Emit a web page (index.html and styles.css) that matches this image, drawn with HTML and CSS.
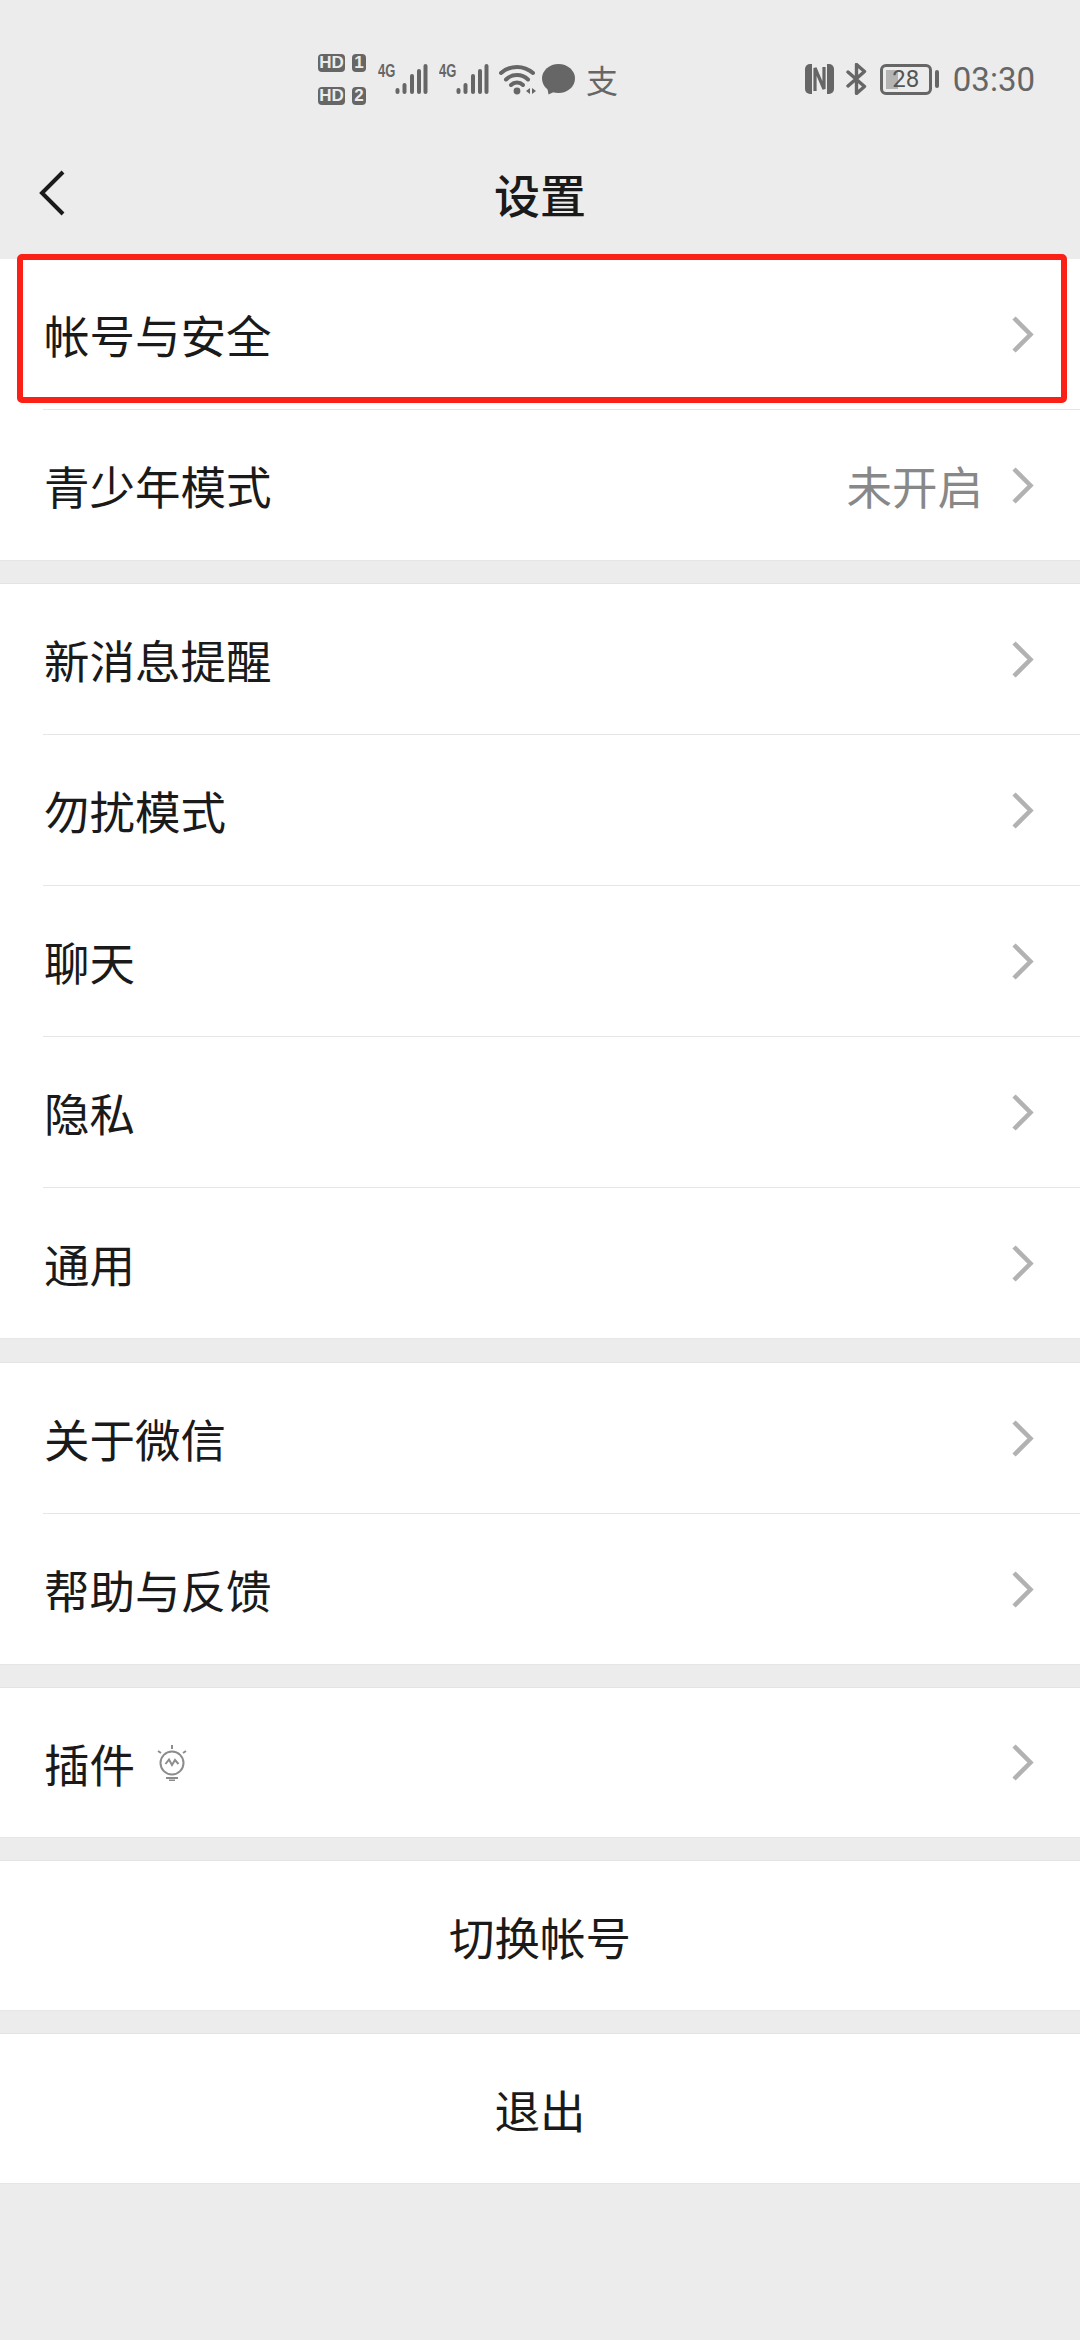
FILE: index.html
```html
<!DOCTYPE html>
<html lang="zh-CN">
<head>
  <meta charset="UTF-8">
  <meta name="viewport" content="width=device-width, initial-scale=1.0">
  <title>设置</title>
  <link rel="stylesheet" href="styles.css">
</head>
<body>
  <svg class="defs" width="0" height="0">
    <symbol id="chevron" viewBox="0 0 23 39">
      <path d="M3 3 L19.5 19.5 L3 36" fill="none" stroke="#b2b2b2" stroke-width="4.5"/>
    </symbol>
    <symbol id="signal" viewBox="0 0 33 32">
      <g fill="none" stroke="#666" stroke-width="4" stroke-linecap="round">
        <path d="M2.5 29 V27"/>
        <path d="M9.5 29 V22"/>
        <path d="M17 29 V13"/>
        <path d="M24 29 V8"/>
        <path d="M30.5 29 V3"/>
      </g>
    </symbol>
  </svg>

  <header>
    <div class="status-bar">
      <div class="sims">
        <span class="hd">HD</span><span class="sim-no">1</span>
        <span class="hd">HD</span><span class="sim-no">2</span>
      </div>
      <div class="net net-one">
        <span class="net-label">4G</span>
        <svg width="33" height="32"><use href="#signal"/></svg>
      </div>
      <div class="net net-two">
        <span class="net-label">4G</span>
        <svg width="33" height="32"><use href="#signal"/></svg>
      </div>
      <svg class="ic-wifi" width="38" height="32" viewBox="0 0 38 32">
        <g fill="none" stroke="#666" stroke-width="4" stroke-linecap="round">
          <path d="M2 10 A24 24 0 0 1 34 10"/>
          <path d="M7 16.5 A16 16 0 0 1 29 16.5"/>
          <path d="M12 22 A8.5 8.5 0 0 1 24 22"/>
        </g>
        <circle cx="18" cy="28" r="3.4" fill="#666"/>
        <path d="M31 25 V31 L27 28 Z M33 25 V31 L37 28 Z" fill="#666"/>
      </svg>
      <svg class="ic-bubble" width="33" height="31" viewBox="0 0 33 31">
        <ellipse cx="16.5" cy="14.5" rx="16.5" ry="14.5" fill="#666"/>
        <path d="M5 22 L6.5 30.5 L16 26 Z" fill="#666"/>
      </svg>
      <span class="ic-pay">支</span>

      <svg class="ic-nfc" width="29" height="30" viewBox="0 0 29 30">
        <path d="M7 0 H5 A5 5 0 0 0 0 5 V25 A5 5 0 0 0 5 30 H7 Z" fill="#666"/>
        <path d="M22 0 H24 A5 5 0 0 1 29 5 V25 A5 5 0 0 1 24 30 H22 Z" fill="#666"/>
        <path d="M10 27 V4 L19 25 V3" fill="none" stroke="#666" stroke-width="3.2"/>
      </svg>
      <svg class="ic-bt" width="21" height="32" viewBox="0 0 21 32">
        <path d="M2 9 L18.5 23.5 L10.5 30.5 V1.5 L18.5 8.5 L2 23" fill="none" stroke="#666" stroke-width="3.4" stroke-linecap="round" stroke-linejoin="round"/>
      </svg>
      <div class="battery">
        <div class="battery-body">
          <div class="battery-fill"></div>
          <span class="battery-num">28</span>
        </div>
        <div class="battery-nub"></div>
      </div>
      <span class="clock">03:30</span>
    </div>

    <nav class="nav-bar">
      <svg class="back" width="28" height="48" viewBox="0 0 28 48">
        <path d="M24 3 L3 24 L24 45" fill="none" stroke="#1a1a1a" stroke-width="4"/>
      </svg>
      <h1>设置</h1>
    </nav>
  </header>

  <main>
    <section class="group first">
      <div class="marker"></div>
      <a class="row"><span class="label">帐号与安全</span><svg class="chevron"><use href="#chevron"/></svg></a>
      <a class="row"><span class="label">青少年模式</span><span class="value">未开启</span><svg class="chevron"><use href="#chevron"/></svg></a>
    </section>

    <section class="group">
      <a class="row"><span class="label">新消息提醒</span><svg class="chevron"><use href="#chevron"/></svg></a>
      <a class="row"><span class="label">勿扰模式</span><svg class="chevron"><use href="#chevron"/></svg></a>
      <a class="row"><span class="label">聊天</span><svg class="chevron"><use href="#chevron"/></svg></a>
      <a class="row"><span class="label">隐私</span><svg class="chevron"><use href="#chevron"/></svg></a>
      <a class="row"><span class="label">通用</span><svg class="chevron"><use href="#chevron"/></svg></a>
    </section>

    <section class="group wide-gap">
      <a class="row"><span class="label">关于微信</span><svg class="chevron"><use href="#chevron"/></svg></a>
      <a class="row"><span class="label">帮助与反馈</span><svg class="chevron"><use href="#chevron"/></svg></a>
    </section>

    <section class="group">
      <a class="row">
        <span class="label">插件</span>
        <svg class="bulb" width="30" height="36" viewBox="0 0 30 36">
          <g fill="none" stroke="#8c8c8c" stroke-width="2">
            <circle cx="15" cy="18" r="11.5"/>
            <path d="M8.5 19 L12 14.5 L15 20 L18 15 L21.5 19"/>
            <path d="M9 33 H21 M12 35.5 H18"/>
            <path d="M15 0 V4 M1 6 L4 8 M29 6 L26 8"/>
          </g>
        </svg>
        <svg class="chevron"><use href="#chevron"/></svg>
      </a>
    </section>

    <section class="group">
      <a class="row center"><span class="label">切换帐号</span></a>
    </section>

    <section class="group">
      <a class="row center"><span class="label">退出</span></a>
    </section>
  </main>
</body>
</html>
```

FILE: styles.css
```css
html, body {
  margin: 0;
  padding: 0;
}
body {
  height: 2340px;
  overflow: hidden;
  background-color: #ececec;
  color: #1a1a1a;
  font-family: "Noto Sans CJK SC", "Noto Sans", sans-serif;
}
.defs {
  position: absolute;
}

/* status bar */
.status-bar {
  display: flex;
  align-items: center;
  box-sizing: border-box;
  height: 133px;
  padding: 53px 45px 28px 318px;
}
.sims {
  display: grid;
  grid-template-columns: 27px 14px;
  grid-template-rows: 18px 18px;
  column-gap: 7px;
  row-gap: 15px;
}
.hd, .sim-no {
  display: flex;
  align-items: center;
  justify-content: center;
  background-color: #666;
  color: #ececec;
  border-radius: 4px;
  font-family: "Liberation Sans", sans-serif;
  font-size: 17px;
  font-weight: bold;
}
.net {
  display: flex;
  width: 50px;
}
.net-one {
  margin-left: 12px;
}
.net-two {
  margin-left: 11px;
}
.net-label {
  width: 17px;
  font-family: "Liberation Sans", sans-serif;
  font-size: 18px;
  line-height: 16px;
  font-weight: bold;
  color: #666;
  transform: scaleX(0.72);
  transform-origin: left top;
}
.ic-wifi {
  margin-left: 10px;
}
.ic-bubble {
  margin-left: 5px;
}
.ic-pay {
  margin-left: 11px;
  width: 32px;
  font-size: 32px;
  line-height: 32px;
  color: #666;
}
.ic-nfc {
  margin-left: auto;
}
.ic-bt {
  margin-left: 12px;
}
.battery {
  display: flex;
  align-items: center;
  margin-left: 13px;
}
.battery-body {
  position: relative;
  display: flex;
  align-items: center;
  justify-content: center;
  box-sizing: border-box;
  width: 52px;
  height: 31px;
  border: 3px solid #666;
  border-radius: 6px;
}
.battery-fill {
  position: absolute;
  left: 3px;
  top: 3px;
  bottom: 3px;
  width: 12px;
  background-color: #b4b4b4;
}
.battery-num {
  position: relative;
  font-family: "Roboto", sans-serif;
  font-size: 24px;
  color: #555;
}
.battery-nub {
  width: 4px;
  height: 18px;
  margin-left: 3px;
  background-color: #666;
  border-radius: 2px;
}
.clock {
  margin-left: 14px;
  font-family: "Roboto", sans-serif;
  font-size: 33px;
  color: #666;
}

/* nav */
.nav-bar {
  position: relative;
  display: flex;
  align-items: center;
  justify-content: center;
  height: 126px;
}
.nav-bar h1 {
  margin: 0 0 6px;
  font-size: 46px;
  font-weight: 500;
}
.back {
  position: absolute;
  left: 39px;
  top: 36px;
}

/* list */
.group {
  position: relative;
  background-color: #fff;
  margin-top: 22px;
  border-top: 1px solid #e3e3e3;
}
.group.first {
  margin-top: 0;
  border-top: none;
}
.group.wide-gap {
  margin-top: 23px;
}
.row {
  display: flex;
  align-items: center;
  box-sizing: border-box;
  height: 151px;
  margin-left: 43px;
  padding: 0 46px 0 1px;
  border-bottom: 1px solid #e6e6e6;
}
.row:last-child {
  margin-left: 0;
  padding-left: 44px;
}
.row:only-child {
  height: 150px;
}
.row.center {
  justify-content: center;
  padding: 0;
}
.label {
  font-size: 45.5px;
}
.value {
  margin-left: auto;
  margin-right: 28px;
  font-size: 45.5px;
  color: #888;
}
.chevron {
  width: 23px;
  height: 39px;
  margin-left: auto;
}
.value + .chevron {
  margin-left: 0;
}
.bulb {
  margin-left: 22px;
}
.bulb + .chevron {
  margin-left: auto;
}

/* red box from the annotated screenshot */
.marker {
  position: absolute;
  left: 17px;
  right: 13px;
  top: -5px;
  box-sizing: border-box;
  height: 149px;
  border: 6px solid #fb2015;
  border-radius: 5px;
}
```
